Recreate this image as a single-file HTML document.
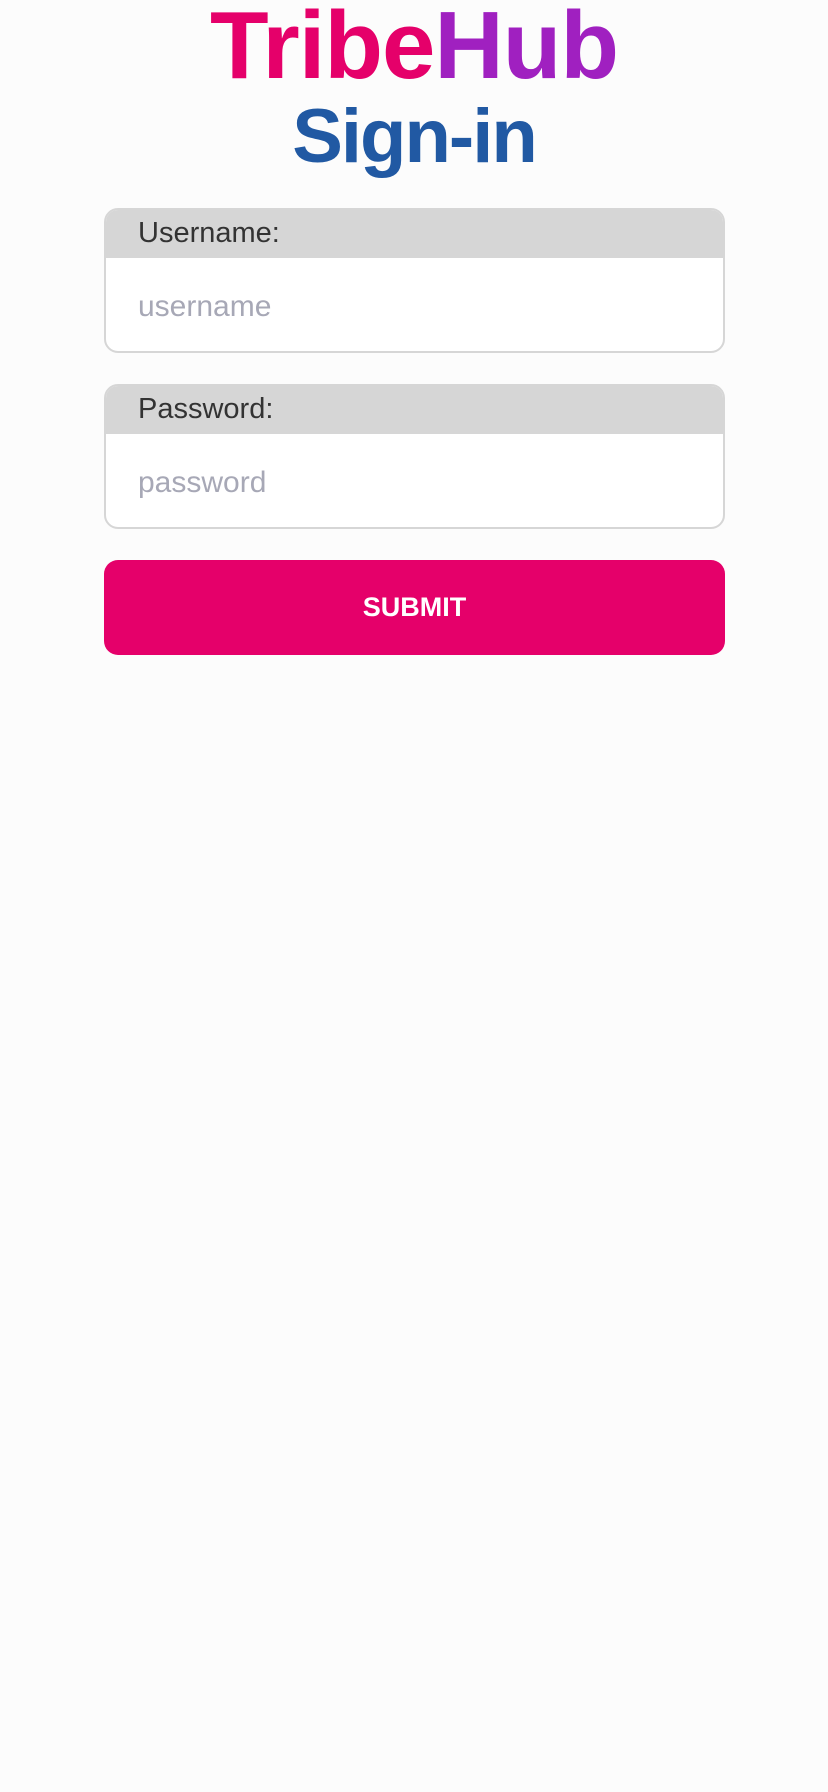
<!DOCTYPE html>
<html><head><meta charset="utf-8"><style>
html,body{margin:0;padding:0;background:#fcfcfc;width:828px;height:1792px;overflow:hidden;font-family:"Liberation Sans",sans-serif}
.t1{position:absolute;left:0;width:828px;top:-9px;text-align:center;font-weight:bold;font-size:96px;line-height:110px;letter-spacing:-1px}
.t2{position:absolute;left:0;width:828px;top:92px;text-align:center;font-weight:bold;font-size:76px;line-height:90px;color:#2159a3;letter-spacing:-2px}
.box{position:absolute;left:104px;width:617px;border:2px solid #d6d6d6;border-radius:14px;background:#fff;overflow:hidden}
.lab{background:#d6d6d6;height:48px;font-size:29px;line-height:46px;color:#333;padding-left:32px;font-weight:300}
.ph{font-size:30px;color:#a7a8b6;padding-left:32px;line-height:98px}
.btn{position:absolute;left:104px;top:560px;width:621px;height:95px;background:#e5006a;border-radius:14px;color:#fff;font-weight:bold;font-size:27px;text-align:center;line-height:95px}
</style></head><body>
<div class="t1"><span style="color:#e5006a">Tribe</span><span style="color:#a020c0">Hub</span></div>
<div class="t2">Sign-in</div>
<div class="box" style="top:208px;height:141px"><div class="lab">Username:</div><div class="ph">username</div></div>
<div class="box" style="top:384px;height:141px"><div class="lab">Password:</div><div class="ph">password</div></div>
<div class="btn">SUBMIT</div>
</body></html>
